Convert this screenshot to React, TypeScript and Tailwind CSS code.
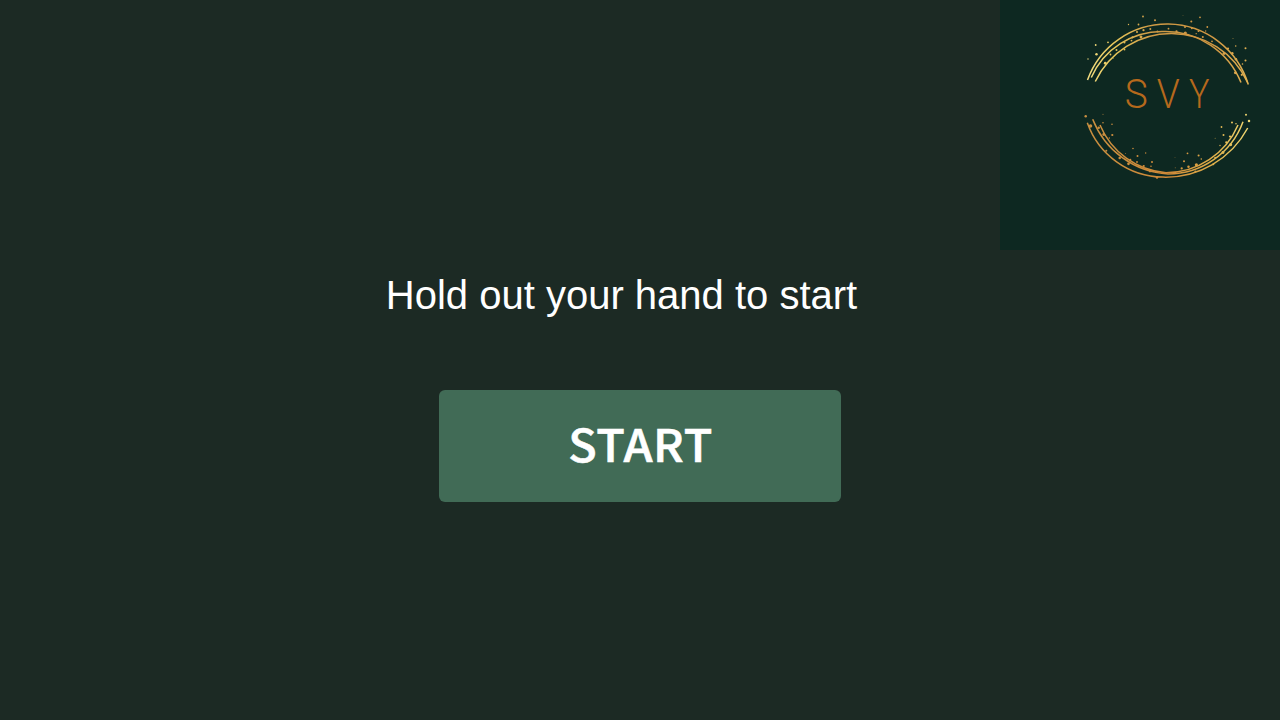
const topArcs = [
  "M87.5 80A84.9 84.9 0 0 1 168.5 24.1A84.9 84.9 0 0 1 248.3 84.5",
  "M91.3 77.5A77.3 77.3 0 0 1 164 31.5A81.5 81.5 0 0 1 241 82.5",
  "M95.3 81.5A84 84 0 0 1 247.6 82.5",
];
const bottomArcs = [
  "M87.3 122.7A81.5 81.5 0 0 0 163 177.1A93 93 0 0 0 247.7 128",
  "M92.7 119.3A86 86 0 0 0 168 174A79.9 79.9 0 0 0 243 121.7",
  "M100 125A78 78 0 0 0 166 172.7A78.2 78.2 0 0 0 238 125",
];

// Gold flecks: x, y, radius.
const flecks: [number, number, number][] = [
  [143, 16.5, 0.8], [155, 20.3, 0.9], [128.5, 24.5, 0.6], [138.5, 24.5, 0.8], [108, 42.3, 0.8], [95.7, 45, 0.8],
  [96.5, 54.3, 1.1], [88, 59, 0.6], [110.5, 54.5, 0.8], [113.3, 58.3, 0.5], [116.5, 50, 0.9], [124.5, 49.5, 0.8],
  [105.3, 63.3, 1.3], [124.5, 42.6, 0.9], [131.5, 40.6, 0.8], [137, 32, 0.9], [143.5, 30.2, 1], [150.3, 29, 0.9],
  [141, 37, 1.3], [132.5, 37.3, 1], [157.5, 31.4, 0.9], [168.5, 28.7, 0.8], [183, 15.5, 0.4], [200, 17.3, 0.8],
  [191.3, 21.5, 0.9], [207.3, 27, 0.8], [205.7, 31, 0.6], [185, 27, 0.9], [191.8, 28.3, 0.9], [185.3, 33, 1.4],
  [176.5, 31.3, 1], [198.5, 31.2, 0.8], [196.2, 33.7, 0.6], [202.8, 37, 0.9], [212, 41.3, 0.8], [233, 38.5, 0.5],
  [235.7, 46, 0.7], [245.5, 48.2, 0.9], [228, 48.5, 1], [232.3, 53.2, 1.1], [224, 53.5, 1.3], [236, 59.3, 1.1],
  [245.5, 60.5, 0.9], [242.5, 64, 0.7], [235.3, 72.8, 1.2], [241.8, 74.8, 1],
  [85.7, 116.3, 1.1], [90.5, 126, 1.6], [103, 114.4, 0.5], [103, 122.7, 0.7], [112, 124.2, 0.7], [98.7, 127.7, 1.1],
  [103.8, 134.5, 1.3], [112.3, 135, 1], [109.3, 138, 0.6], [106.3, 150.7, 0.9], [125.5, 153.5, 0.5], [133, 148.5, 0.7],
  [119.7, 158, 1.1], [137.5, 156, 0.9], [145.7, 153, 0.6], [152, 162, 0.9], [137, 162, 0.8], [130.3, 159.7, 0.9],
  [128.5, 163.8, 1.2], [143.7, 166, 1], [151, 166.2, 0.7], [157, 177.4, 1.1], [150, 171.3, 1],
  [246, 114.7, 0.9], [249, 121, 1.1], [232, 122.5, 0.9], [236, 123.8, 0.7], [221.5, 127, 0.8], [223.5, 135, 0.9],
  [230, 136.5, 1], [226.3, 142.4, 1], [230.7, 144.7, 1.3], [215.2, 138.2, 0.5], [220, 145.5, 0.6], [223, 152.5, 1.3],
  [215.2, 157.7, 0.9], [213.3, 164.2, 0.9], [187.5, 153.3, 0.8], [198.6, 155.5, 0.9], [201.3, 159, 0.7],
  [184, 161.2, 0.9], [175.3, 167.7, 0.5], [181.7, 168.4, 1], [188.5, 166.8, 1.1], [196.4, 164.7, 1.4], [195.5, 171.5, 1], [175, 157.5, 0.4],
];

function Logo() {
  return (
    <svg viewBox="0 0 280 250" className="block h-[250px] w-[280px]" aria-label="SVY">
      <defs>
        <linearGradient id="goldTop" gradientUnits="userSpaceOnUse" x1="88" y1="0" x2="250" y2="0">
          <stop offset="0" stopColor="#f2dc80" />
          <stop offset="0.16" stopColor="#e6c65a" />
          <stop offset="0.4" stopColor="#cf9a45" />
          <stop offset="0.75" stopColor="#cf9642" />
          <stop offset="1" stopColor="#e2b252" />
        </linearGradient>
        <linearGradient id="goldBottom" gradientUnits="userSpaceOnUse" x1="88" y1="0" x2="250" y2="0">
          <stop offset="0" stopColor="#c98f40" />
          <stop offset="0.5" stopColor="#cf8a38" />
          <stop offset="0.78" stopColor="#dfb04a" />
          <stop offset="1" stopColor="#efd873" />
        </linearGradient>
      </defs>
      <g fill="none" strokeWidth="1.5" stroke="url(#goldTop)">
        {topArcs.map((d) => <path key={d} d={d} />)}
      </g>
      <g fill="none" strokeWidth="1.5" stroke="url(#goldBottom)">
        {bottomArcs.map((d) => <path key={d} d={d} />)}
      </g>
      {flecks.map(([x, y, r], i) => (
        <circle key={i} cx={x} cy={y} r={r * 1.12} fill={y < 100 ? "url(#goldTop)" : "url(#goldBottom)"} opacity={r < 0.6 ? 0.6 : 1} />
      ))}
      <g fill="#b5691c" fontSize="41" fontWeight="300" className="font-['Roboto',sans-serif]">
        <text x="124.7" y="107.7" textLength="23" lengthAdjust="spacingAndGlyphs">S</text>
        <text x="156.8" y="107.7" textLength="23" lengthAdjust="spacingAndGlyphs">V</text>
        <text x="188.9" y="107.7" textLength="20.5" lengthAdjust="spacingAndGlyphs">Y</text>
      </g>
    </svg>
  );
}

export default function App() {
  return (
    <main className="flex h-[720px] w-[1280px] flex-col overflow-hidden bg-[#1c2a24]">
      <header className="flex h-[250px] shrink-0 justify-end">
        <div className="h-[250px] w-[280px] bg-[#0d2821]">
          <Logo />
        </div>
      </header>
      <section className="flex flex-col items-center">
        <p className="mt-[21px] mr-[37px] h-[48px] whitespace-nowrap text-[40px] leading-[48px] text-white font-['Liberation_Sans',sans-serif]">
          Hold out your hand to start
        </p>
        <button
          type="button"
          className="mt-[71px] flex h-[112px] w-[402px] items-center justify-center rounded-md bg-[#416b56] pb-[8px] pl-[2px] text-[45px] leading-none font-medium text-white font-['Noto_Sans_CJK_SC',sans-serif]"
        >
          <span className="block scale-x-[1.04] tracking-[0.6px] [-webkit-text-stroke:0.6px_white]">START</span>
        </button>
      </section>
    </main>
  );
}
